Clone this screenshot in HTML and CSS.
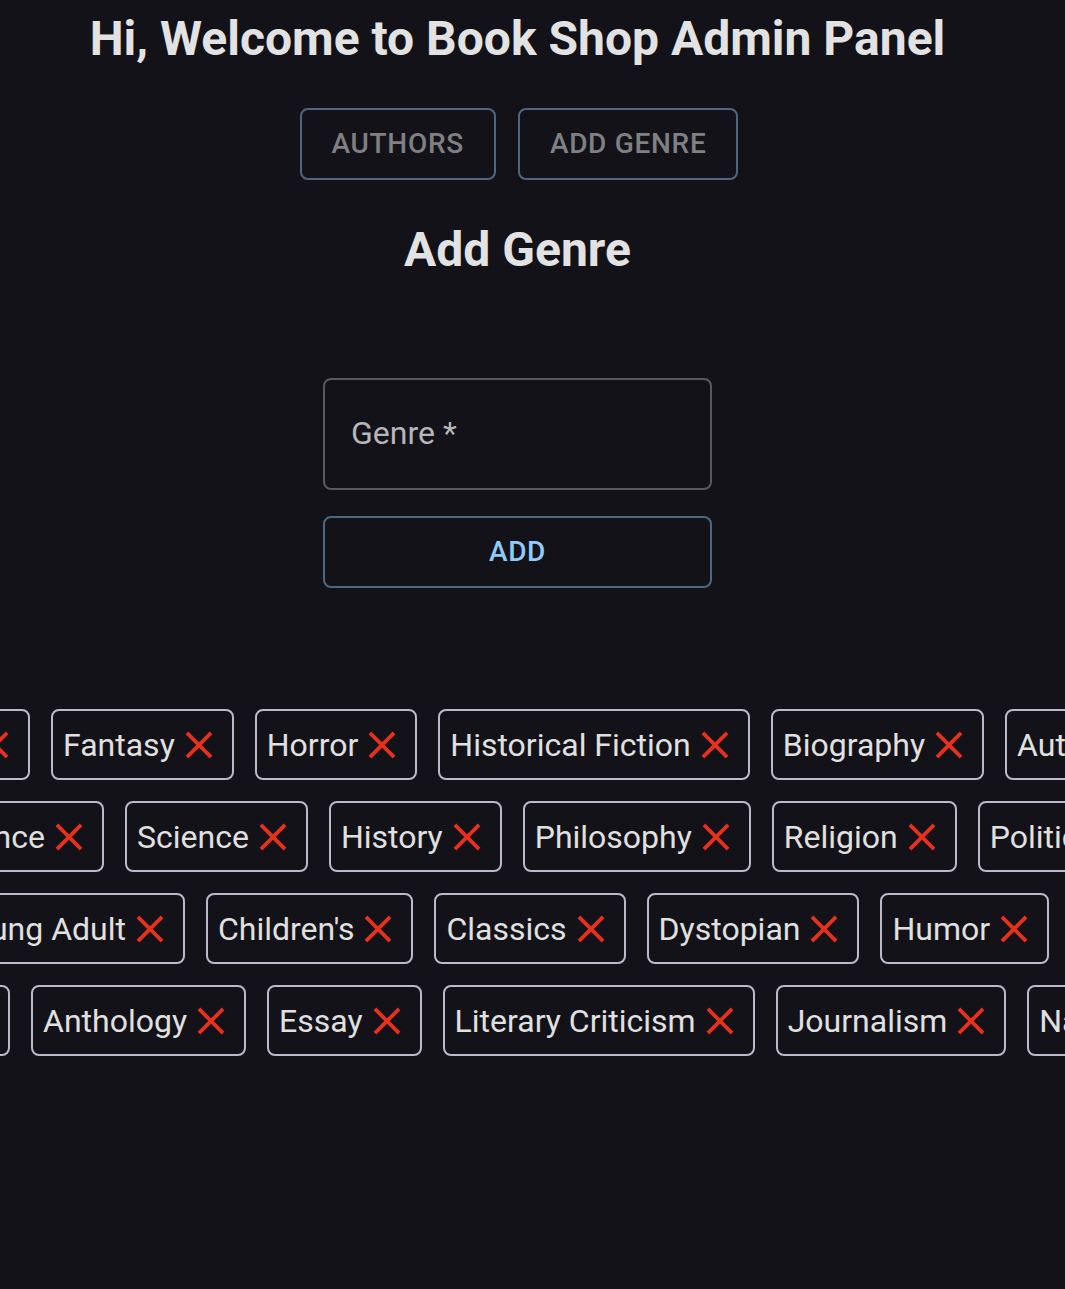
FILE: index.html
```html
<!DOCTYPE html>
<html lang="en">
<head>
<meta charset="utf-8">
<title>Book Shop Admin Panel</title>
<link rel="stylesheet" href="styles.css">
</head>
<body>
<div class="page">
  <div class="panel">
    <h1 class="title">Hi, Welcome to Book Shop Admin Panel</h1>
    <nav class="nav">
      <button class="nav-btn nav-btn--muted">Authors</button>
      <button class="nav-btn nav-btn--muted">Add Genre</button>
    </nav>
    <h2 class="subtitle">Add Genre</h2>
    <form class="form">
      <div class="field"><label class="field-label" for="genre">Genre *</label><input id="genre" class="field-input" type="text"></div>
      <button type="button" class="add-btn">Add</button>
    </form>
  </div>

  <section class="chips">
    <div class="chip-row chip-row--1">
      <div class="lead"><div class="chip"><span>Science Fiction</span><svg class="x" viewBox="0 0 24 24"><path d="M19 6.41 17.59 5 12 10.59 6.41 5 5 6.41 10.59 12 5 17.59 6.41 19 12 13.41 17.59 19 19 17.59 13.41 12z"/></svg></div></div>
      <div class="chip"><span>Fantasy</span><svg class="x" viewBox="0 0 24 24"><path d="M19 6.41 17.59 5 12 10.59 6.41 5 5 6.41 10.59 12 5 17.59 6.41 19 12 13.41 17.59 19 19 17.59 13.41 12z"/></svg></div>
      <div class="chip"><span>Horror</span><svg class="x" viewBox="0 0 24 24"><path d="M19 6.41 17.59 5 12 10.59 6.41 5 5 6.41 10.59 12 5 17.59 6.41 19 12 13.41 17.59 19 19 17.59 13.41 12z"/></svg></div>
      <div class="chip"><span>Historical Fiction</span><svg class="x" viewBox="0 0 24 24"><path d="M19 6.41 17.59 5 12 10.59 6.41 5 5 6.41 10.59 12 5 17.59 6.41 19 12 13.41 17.59 19 19 17.59 13.41 12z"/></svg></div>
      <div class="chip"><span>Biography</span><svg class="x" viewBox="0 0 24 24"><path d="M19 6.41 17.59 5 12 10.59 6.41 5 5 6.41 10.59 12 5 17.59 6.41 19 12 13.41 17.59 19 19 17.59 13.41 12z"/></svg></div>
      <div class="chip"><span>Autobiography</span><svg class="x" viewBox="0 0 24 24"><path d="M19 6.41 17.59 5 12 10.59 6.41 5 5 6.41 10.59 12 5 17.59 6.41 19 12 13.41 17.59 19 19 17.59 13.41 12z"/></svg></div>
    </div>
    <div class="chip-row chip-row--2">
      <div class="lead"><div class="chip"><span>Romance</span><svg class="x" viewBox="0 0 24 24"><path d="M19 6.41 17.59 5 12 10.59 6.41 5 5 6.41 10.59 12 5 17.59 6.41 19 12 13.41 17.59 19 19 17.59 13.41 12z"/></svg></div></div>
      <div class="chip"><span>Science</span><svg class="x" viewBox="0 0 24 24"><path d="M19 6.41 17.59 5 12 10.59 6.41 5 5 6.41 10.59 12 5 17.59 6.41 19 12 13.41 17.59 19 19 17.59 13.41 12z"/></svg></div>
      <div class="chip"><span>History</span><svg class="x" viewBox="0 0 24 24"><path d="M19 6.41 17.59 5 12 10.59 6.41 5 5 6.41 10.59 12 5 17.59 6.41 19 12 13.41 17.59 19 19 17.59 13.41 12z"/></svg></div>
      <div class="chip"><span>Philosophy</span><svg class="x" viewBox="0 0 24 24"><path d="M19 6.41 17.59 5 12 10.59 6.41 5 5 6.41 10.59 12 5 17.59 6.41 19 12 13.41 17.59 19 19 17.59 13.41 12z"/></svg></div>
      <div class="chip"><span>Religion</span><svg class="x" viewBox="0 0 24 24"><path d="M19 6.41 17.59 5 12 10.59 6.41 5 5 6.41 10.59 12 5 17.59 6.41 19 12 13.41 17.59 19 19 17.59 13.41 12z"/></svg></div>
      <div class="chip"><span>Politics</span><svg class="x" viewBox="0 0 24 24"><path d="M19 6.41 17.59 5 12 10.59 6.41 5 5 6.41 10.59 12 5 17.59 6.41 19 12 13.41 17.59 19 19 17.59 13.41 12z"/></svg></div>
    </div>
    <div class="chip-row chip-row--3">
      <div class="lead"><div class="chip"><span>Young Adult</span><svg class="x" viewBox="0 0 24 24"><path d="M19 6.41 17.59 5 12 10.59 6.41 5 5 6.41 10.59 12 5 17.59 6.41 19 12 13.41 17.59 19 19 17.59 13.41 12z"/></svg></div></div>
      <div class="chip"><span>Children's</span><svg class="x" viewBox="0 0 24 24"><path d="M19 6.41 17.59 5 12 10.59 6.41 5 5 6.41 10.59 12 5 17.59 6.41 19 12 13.41 17.59 19 19 17.59 13.41 12z"/></svg></div>
      <div class="chip"><span>Classics</span><svg class="x" viewBox="0 0 24 24"><path d="M19 6.41 17.59 5 12 10.59 6.41 5 5 6.41 10.59 12 5 17.59 6.41 19 12 13.41 17.59 19 19 17.59 13.41 12z"/></svg></div>
      <div class="chip"><span>Dystopian</span><svg class="x" viewBox="0 0 24 24"><path d="M19 6.41 17.59 5 12 10.59 6.41 5 5 6.41 10.59 12 5 17.59 6.41 19 12 13.41 17.59 19 19 17.59 13.41 12z"/></svg></div>
      <div class="chip"><span>Humor</span><svg class="x" viewBox="0 0 24 24"><path d="M19 6.41 17.59 5 12 10.59 6.41 5 5 6.41 10.59 12 5 17.59 6.41 19 12 13.41 17.59 19 19 17.59 13.41 12z"/></svg></div>
    </div>
    <div class="chip-row chip-row--4">
      <div class="lead"><div class="chip"><span>Poetry</span><svg class="x" viewBox="0 0 24 24"><path d="M19 6.41 17.59 5 12 10.59 6.41 5 5 6.41 10.59 12 5 17.59 6.41 19 12 13.41 17.59 19 19 17.59 13.41 12z"/></svg></div></div>
      <div class="chip"><span>Anthology</span><svg class="x" viewBox="0 0 24 24"><path d="M19 6.41 17.59 5 12 10.59 6.41 5 5 6.41 10.59 12 5 17.59 6.41 19 12 13.41 17.59 19 19 17.59 13.41 12z"/></svg></div>
      <div class="chip"><span>Essay</span><svg class="x" viewBox="0 0 24 24"><path d="M19 6.41 17.59 5 12 10.59 6.41 5 5 6.41 10.59 12 5 17.59 6.41 19 12 13.41 17.59 19 19 17.59 13.41 12z"/></svg></div>
      <div class="chip"><span>Literary Criticism</span><svg class="x" viewBox="0 0 24 24"><path d="M19 6.41 17.59 5 12 10.59 6.41 5 5 6.41 10.59 12 5 17.59 6.41 19 12 13.41 17.59 19 19 17.59 13.41 12z"/></svg></div>
      <div class="chip"><span>Journalism</span><svg class="x" viewBox="0 0 24 24"><path d="M19 6.41 17.59 5 12 10.59 6.41 5 5 6.41 10.59 12 5 17.59 6.41 19 12 13.41 17.59 19 19 17.59 13.41 12z"/></svg></div>
      <div class="chip"><span>Nature</span><svg class="x" viewBox="0 0 24 24"><path d="M19 6.41 17.59 5 12 10.59 6.41 5 5 6.41 10.59 12 5 17.59 6.41 19 12 13.41 17.59 19 19 17.59 13.41 12z"/></svg></div>
    </div>
  </section>
</div>
</body>
</html>
```

FILE: styles.css
```css
html, body {
  margin: 0;
  padding: 0;
  background: #121218;
  overflow: hidden;
}

body {
  font-family: Roboto, "Liberation Sans", sans-serif;
  color: #e0e0e0;
  min-height: 1289px;
}

.page {
  width: 100%;
}

.panel {
  width: 1035px;
  padding-top: 11px;
  display: flex;
  flex-direction: column;
  align-items: center;
}

.title {
  margin: 0;
  font-size: 48px;
  line-height: 56px;
  font-weight: 700;
  color: #e2e2e2;
}

.nav {
  margin-top: 41px;
  display: flex;
  gap: 22px;
  padding-left: 3px;
}

.nav-btn {
  box-sizing: border-box;
  height: 72px;
  padding: 10px 30px;
  border: 2px solid #4e6680;
  border-radius: 8px;
  background: transparent;
  font-family: Roboto, "Liberation Sans", sans-serif;
  font-size: 28px;
  font-weight: 500;
  line-height: 48px;
  letter-spacing: 0.7px;
  text-transform: uppercase;
}

.nav-btn--muted {
  color: #808083;
}

.subtitle {
  margin: 42px 0 0;
  font-size: 48px;
  line-height: 56px;
  font-weight: 700;
  color: #e2e2e2;
}

.form {
  margin-top: 100px;
  width: 389px;
  display: flex;
  flex-direction: column;
  gap: 26px;
}

.field {
  box-sizing: border-box;
  height: 112px;
  border: 2px solid #58585d;
  border-radius: 8px;
  padding: 30px 26px 0;
  display: flex;
  flex-direction: column;
}

.field-label {
  font-size: 32px;
  line-height: 46px;
  color: #b6b6b9;
}

.field-input {
  width: 0;
  height: 0;
  padding: 0;
  border: 0;
  opacity: 0;
}

.add-btn {
  box-sizing: border-box;
  height: 72px;
  border: 2px solid #4e6680;
  border-radius: 8px;
  background: transparent;
  color: #90caf9;
  font-family: Roboto, "Liberation Sans", sans-serif;
  font-size: 28px;
  font-weight: 500;
  line-height: 48px;
  letter-spacing: 0.7px;
  text-transform: uppercase;
}

.chips {
  margin-top: 121px;
  width: 100%;
  overflow: hidden;
  display: flex;
  flex-direction: column;
  gap: 21px;
}

.chip-row {
  display: flex;
  gap: 21px;
}

.chip-row--1 { padding-left: 30px; }
.chip-row--2 { padding-left: 104px; }
.chip-row--3 { padding-left: 185px; }
.chip-row--4 { padding-left: 10px; }

.lead {
  width: 0;
  flex-shrink: 0;
  display: flex;
  justify-content: flex-end;
}

.chip {
  flex-shrink: 0;
  box-sizing: border-box;
  height: 71px;
  padding: 0 10px;
  border: 2px solid #bdb9c8;
  border-radius: 8px;
  display: flex;
  align-items: center;
  font-size: 32px;
  line-height: 46px;
  color: #e0e0e0;
  white-space: nowrap;
}

.x {
  width: 46px;
  height: 46px;
  margin-left: 1px;
  fill: #e6311f;
  flex-shrink: 0;
}
```
